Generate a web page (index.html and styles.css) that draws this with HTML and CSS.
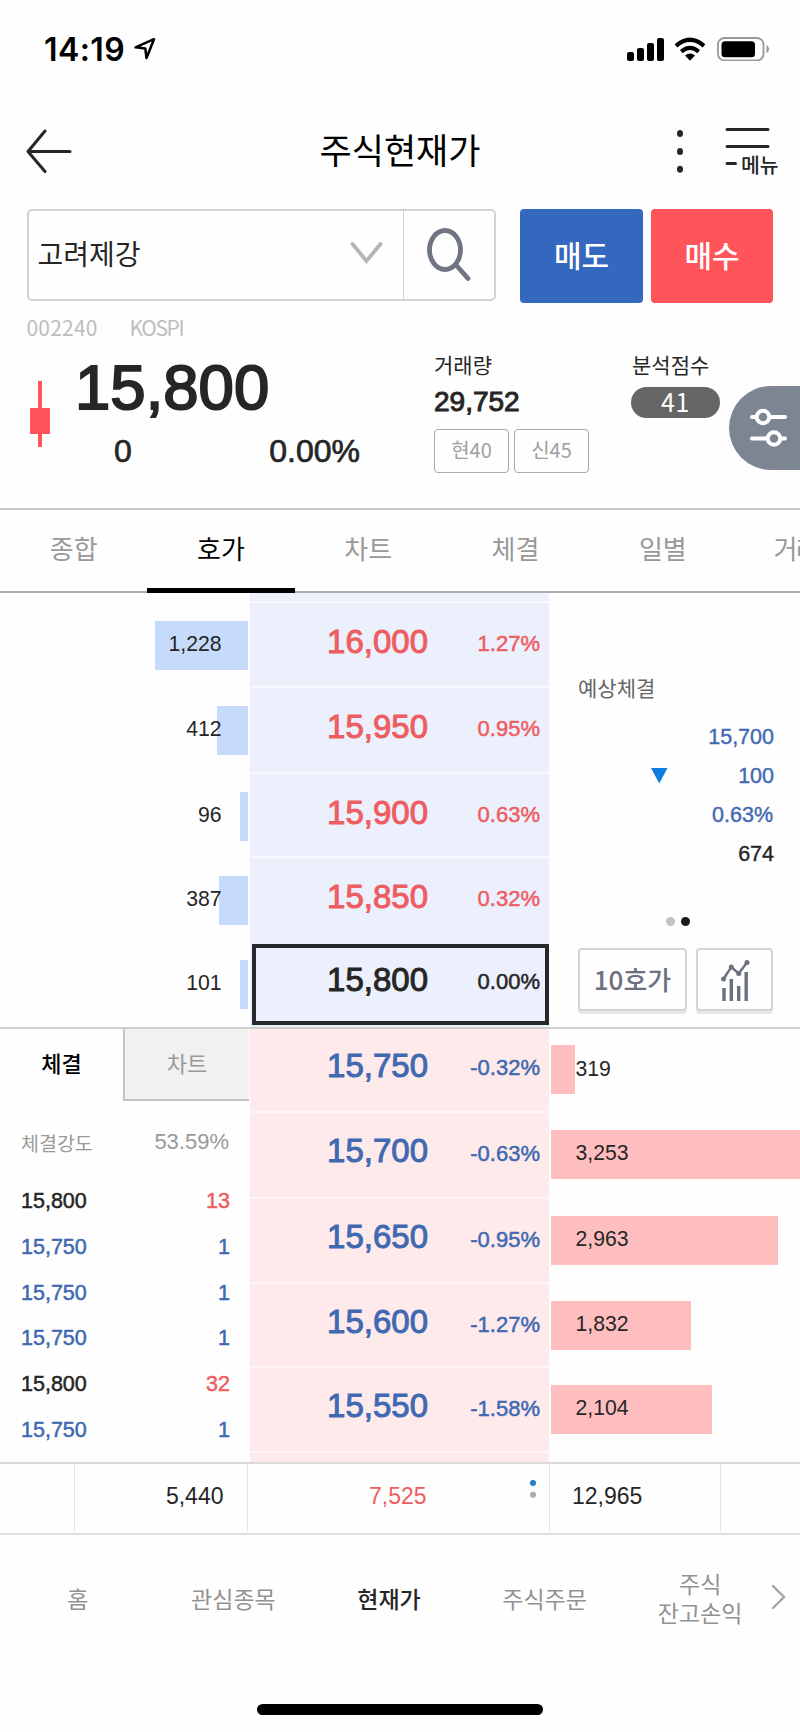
FILE: index.html
```html
<!DOCTYPE html>
<html lang="ko">
<head>
<meta charset="utf-8">
<title>주식현재가</title>
<link rel="stylesheet" href="styles.css">
</head>
<body>
<div class="screen">
  <div class="status">
    <span class="clock">14:19</span>
    <svg class="loc" width="24" height="24" viewBox="0 0 24 24"><path d="M2.500 10.300L21 2.200L13.500 21L12.300 11.500Z" fill="none" stroke="#000" stroke-width="2.500" stroke-linejoin="round"/></svg>
    <svg class="signal" width="38" height="24" viewBox="0 0 38 24"><rect x="0" y="15" width="7" height="9" rx="2"/><rect x="10" y="11" width="7" height="13" rx="2"/><rect x="20" y="6" width="7" height="18" rx="2"/><rect x="30" y="1" width="7" height="23" rx="2"/></svg>
    <svg class="wifi" width="32" height="24" viewBox="0 0 32 24"><g fill="none" stroke="#000" stroke-width="4.200"><path d="M2 8.800Q16 -3.200 30 8.800"/><path d="M7.300 14.600Q16 7.200 24.700 14.600"/></g><path d="M11 18.400Q16 14.600 21 18.400L16 23.800Z"/></svg>
    <svg class="battery" width="54" height="24" viewBox="0 0 54 24"><rect x="1" y="1" width="45.500" height="22.500" rx="6.500" fill="#fff" stroke="#999" stroke-width="1.800"/><rect x="4.500" y="4.200" width="33.500" height="16" rx="3.500"/><path d="M49.500 8Q52 9 52 12T49.500 16Z" fill="#999"/></svg>
  </div>

  <header class="header">
    <svg class="back" width="46" height="44" viewBox="0 0 46 44"><path d="M19 2L2 22.500L19 42.500M2 22.500H44" fill="none" stroke="#262626" stroke-width="3" stroke-linecap="round" stroke-linejoin="round"/></svg>
    <h1 class="title">주식현재가</h1>
    <svg class="more" width="8" height="44" viewBox="0 0 8 44"><g fill="#262626"><ellipse cx="4" cy="4.500" rx="3" ry="3.500"/><ellipse cx="4" cy="22.500" rx="3" ry="3.500"/><ellipse cx="4" cy="40.300" rx="3" ry="3.500"/></g></svg>
    <div class="menu">
      <svg width="46" height="40" viewBox="0 0 46 40"><path d="M2 3.500H43M2 20.500H43M2 37.500H10.500" stroke="#262626" stroke-width="3" stroke-linecap="round"/></svg>
      <span class="menu-text">메뉴</span>
    </div>
  </header>

  <section class="search">
    <div class="picker">
      <div class="name">고려제강
        <svg width="33" height="24" viewBox="0 0 33 24"><path d="M2.500 3L16.500 20L30.500 3" fill="none" stroke="#b5b5b5" stroke-width="3.800" stroke-linecap="round"/></svg>
      </div>
      <div class="lens"><svg width="46" height="56" viewBox="0 0 46 56"><ellipse cx="20" cy="23" rx="15.500" ry="19.500" fill="none" stroke="#6f7583" stroke-width="4.800"/><path d="M31.500 38.500L43 51.500" stroke="#6f7583" stroke-width="4.800" stroke-linecap="round"/></svg></div>
    </div>
    <button class="trade sell">매도</button>
    <button class="trade buy">매수</button>
  </section>

  <section class="quote">
    <div class="codes"><span class="code">002240</span><span class="market">KOSPI</span></div>
    <div class="summary">
      <svg class="candle" width="20" height="66" viewBox="0 0 20 66"><path d="M8 0H12V27H20V53H12V66H8V53H0V27H8Z" fill="#ff555a"/></svg>
      <div class="now">
        <div class="last num">15,800</div>
        <div class="change num"><span>0</span><span>0.00%</span></div>
      </div>
      <div class="volume">
        <div class="label">거래량</div>
        <div class="vol num">29,752</div>
        <div class="tags"><span>현40</span><span>신45</span></div>
      </div>
      <div class="score">
        <div class="label">분석점수</div>
        <div class="pill">41</div>
      </div>
      <div class="side"><svg width="40" height="40" viewBox="0 0 40 40"><g fill="#7e8592" stroke="#fff" stroke-width="4" stroke-linecap="round"><path d="M3 9H36M3 30.500H36"/><circle cx="14" cy="9" r="6.300"/><circle cx="25" cy="30.500" r="6.300"/></g></svg></div>
    </div>
  </section>

  <nav class="tabs"><span>종합</span><span class="on">호가</span><span>차트</span><span>체결</span><span>일별</span><span class="cut">거래원</span></nav>

  <section class="asks num">
    <div class="left">
      <div class="row r85"><i class="bar" style="width:92.5px"></i><b>1,228</b></div>
      <div class="row r86"><i class="bar" style="width:31px"></i><b>412</b></div>
      <div class="row r84"><i class="bar" style="width:7.5px"></i><b>96</b></div>
      <div class="row r84"><i class="bar" style="width:29px"></i><b>387</b></div>
      <div class="row r85"><i class="bar" style="width:7.5px"></i><b>101</b></div>
    </div>
    <div class="prices blue-bg">
      <div class="cell r85 up"><b>16,000</b><em>1.27%</em></div>
      <div class="cell r86 up"><b>15,950</b><em>0.95%</em></div>
      <div class="cell r84 up"><b>15,900</b><em>0.63%</em></div>
      <div class="cell r84 up"><b>15,850</b><em>0.32%</em></div>
      <div class="cell current"><b>15,800</b><em>0.00%</em></div>
    </div>
    <div class="expect">
      <div class="expect-title">예상체결</div>
      <div class="line down">15,700</div>
      <div class="line down"><svg width="17" height="16" viewBox="0 0 17 16"><path d="M0 0H16.500L8.250 15.500Z" fill="#0f7bdc"/></svg>100</div>
      <div class="line down percent">0.63%</div>
      <div class="line">674</div>
      <div class="dots"><i></i><i class="on"></i></div>
      <div class="tools">
        <div class="tool ten">10호가</div>
        <div class="tool chart"><svg width="32" height="44" viewBox="0 0 32 44"><g fill="none" stroke="#6b7080" stroke-width="3.400"><path d="M4 29V42M11.300 20V42M18.700 27V42M26.200 13V42"/><path d="M3.500 20L11.300 8L18.700 14.500L27 3.500" stroke-width="2.400"/></g><g fill="#6b7080"><circle cx="3.500" cy="20" r="2.500"/><circle cx="11.300" cy="8" r="2.500"/><circle cx="18.700" cy="14.500" r="2.500"/><circle cx="27" cy="3.500" r="2.500"/></g></svg></div>
      </div>
    </div>
  </section>

  <section class="bids num">
    <div class="ticks">
      <div class="subtabs"><span class="on">체결</span><span>차트</span></div>
      <div class="power"><span>체결강도</span><b>53.59%</b></div>
      <div class="tick"><span>15,800</span><span class="up">13</span></div>
      <div class="tick down"><span>15,750</span><span>1</span></div>
      <div class="tick down"><span>15,750</span><span>1</span></div>
      <div class="tick down"><span>15,750</span><span>1</span></div>
      <div class="tick"><span>15,800</span><span class="up">32</span></div>
      <div class="tick down"><span>15,750</span><span>1</span></div>
    </div>
    <div class="prices pink-bg">
      <div class="cell first down"><b>15,750</b><em>-0.32%</em></div>
      <div class="cell r86 down"><b>15,700</b><em>-0.63%</em></div>
      <div class="cell r85 down"><b>15,650</b><em>-0.95%</em></div>
      <div class="cell r84 down"><b>15,600</b><em>-1.27%</em></div>
      <div class="cell r85 down"><b>15,550</b><em>-1.58%</em></div>
      <div class="cell rest"></div>
    </div>
    <div class="right">
      <div class="row first"><i class="bar" style="width:24.500px"></i><b>319</b></div>
      <div class="row r86"><i class="bar" style="width:249.500px"></i><b>3,253</b></div>
      <div class="row r85"><i class="bar" style="width:227px"></i><b>2,963</b></div>
      <div class="row r84"><i class="bar" style="width:140px"></i><b>1,832</b></div>
      <div class="row r85"><i class="bar" style="width:161.500px"></i><b>2,104</b></div>
    </div>
  </section>

  <section class="totals num">
    <span></span><span class="t-right">5,440</span>
    <span class="diff">7,525<svg width="8" height="20" viewBox="0 0 8 20"><circle cx="4" cy="4" r="3" fill="#1f7fc8"/><circle cx="4" cy="15.700" r="3" fill="#aaa"/></svg></span>
    <span class="t-left">12,965</span><span></span>
  </section>

  <footer class="nav">
    <span>홈</span><span>관심종목</span><span class="on">현재가</span><span>주식주문</span><span>주식<br>잔고손익</span>
    <svg width="16" height="28" viewBox="0 0 16 28"><path d="M2 3L13 14L2 25" fill="none" stroke="#a5a5a5" stroke-width="2.400" stroke-linecap="round"/></svg>
  </footer>
  <div class="home"></div>
</div>
</body>
</html>
```

FILE: styles.css
```css
* { box-sizing: border-box; }
body { margin: 0; background: #fff; }
b, em, i { font-weight: 400; font-style: normal; }
svg { display: block; flex: none; }

.screen {
  width: 800px;
  height: 1732px;
  overflow: hidden;
  display: flex;
  flex-direction: column;
  background: #fefefe;
  color: #262626;
  font-family: "Noto Sans CJK KR", sans-serif;
}
.screen > * { flex: none; }
.num { font-family: "Liberation Sans", "Noto Sans CJK KR", sans-serif; }
.up { color: #ee5d61; }
.down { color: #4069b2; }

/* status bar */
.status { display: flex; height: 100px; padding: 37px 0 0 44px; }
.clock { width: 88px; font: 600 32px/25px Inter, sans-serif; color: #000; letter-spacing: 0.4px; white-space: nowrap; }
.loc { margin-left: 1px; }
.signal { margin-left: 470px; }
.wifi { margin-left: 9px; }
.battery { margin-left: 11px; }

/* header */
.header { display: flex; height: 109px; padding-top: 29px; }
.back { margin: 0 0 0 26px; }
.title { width: 180px; margin: 2px 0 0 238px; text-align: center; font-size: 35px; line-height: 36px; font-weight: 400; color: #000; white-space: nowrap; }
.more { margin-left: 186px; }
.menu { display: flex; margin: -3px 0 0 41px; }
.menu-text { margin: 26px 0 0 -30px; font-size: 20.5px; line-height: 24px; font-weight: 500; }

/* search row */
.search { display: flex; height: 94px; padding-left: 26.5px; }
.picker { display: flex; width: 469px; height: 92px; border: 2px solid #d2d2d2; border-radius: 5px; }
.name { width: 375.5px; display: flex; justify-content: space-between; padding: 0 20px 4px 9px; align-items: center; font-size: 28px; border-right: 1.5px solid #d2d2d2; }
.lens { padding: 16px 0 0 21px; }
.trade { width: 123px; height: 94px; margin-left: 24.5px; padding: 0 0 5px; border: 0; border-radius: 4px; color: #fff; font: 500 30px "Noto Sans CJK KR", sans-serif; }
.buy { margin-left: 8px; width: 122px; background: #ff555a; }
.sell { background: #3467be; }

/* quote */
.quote { height: 205px; }
.codes { display: flex; padding: 12px 0 0 26.5px; font-size: 21px; line-height: 24px; color: #bdbdbd; }
.code { width: 103px; letter-spacing: 0.2px; }
.market { letter-spacing: -1.4px; }
.summary { display: flex; height: 168px; }
.candle { margin: 42px 0 0 30px; }
.now { width: 310px; padding: 15px 0 0 25px; }
.last { font-size: 63.5px; line-height: 66px; -webkit-text-stroke: 2px; }
.change { display: flex; justify-content: space-between; padding: 14px 0 0 39px; font-size: 32px; line-height: 34px; -webkit-text-stroke: 0.7px; }
.volume { width: 196px; padding: 13px 0 0 74px; }
.label { font-size: 21px; line-height: 24px; white-space: nowrap; }
.vol { margin-top: 13px; font-size: 28px; line-height: 26px; -webkit-text-stroke: 1px; }
.tags { display: flex; gap: 5px; margin-top: 14px; }
.tags span { width: 75px; height: 44px; flex: none; border: 1.5px solid #aaa; border-radius: 4px; text-align: center; font-size: 20px; line-height: 40px; color: #a0a0a0; }
.score { width: 173px; padding: 13px 0 0 75px; }
.score .label { padding-left: 1px; }
.pill { width: 89px; height: 31px; margin-top: 11px; border-radius: 16px; background: #666; color: #fff; text-align: center; font-size: 25px; line-height: 28px; letter-spacing: 0.6px; }
.side { width: 71px; height: 84px; margin-top: 47px; padding: 22px 0 0 20px; border-radius: 42px 0 0 42px; background: #7e8592; }

/* tabs */
.tabs { display: flex; height: 85px; border-top: 2px solid #cbcbcb; border-bottom: 2px solid #ababab; color: #999; font-size: 26px; line-height: 75px; text-align: center; }
.tabs span { width: 147.3px; height: 83px; flex: none; }
.tabs .on { color: #000; border-bottom: 5px solid #000; }
.tabs .cut { padding-left: 37px; text-align: left; letter-spacing: -1.5px; }

/* order book */
.asks { display: flex; height: 434px; }
.left { width: 250px; padding-top: 9px; }
.prices { width: 299px; }
.blue-bg { background: #ecf0fd; padding-top: 8px; }
.pink-bg { background: #feeaeb; }
.r84 { height: 84px; }
.r85 { height: 85px; }
.r86 { height: 86px; }
.first { height: 82px; }
.rest { height: 12px; }
.row { display: grid; }
.row > * { grid-area: 1 / 1; }
.row b { font-size: 21.2px; line-height: 24px; }
.left .bar { height: 49px; margin: 18.5px 2.5px 0 0; justify-self: end; background: #c6dbfc; }
.left b { margin: 30px 28.5px 0 0; justify-self: end; }
.cell { display: flex; border-top: 2px solid #f7f9ff; white-space: nowrap; }
.pink-bg .cell { border-color: #fff5f5; }
.cell b { width: 179px; padding: 20px 1px 0 0; text-align: right; font-size: 33px; line-height: 38px; -webkit-text-stroke: 1px; }
.cell em { flex: 1; padding: 29px 9px 0 0; text-align: right; font-size: 22px; line-height: 24px; -webkit-text-stroke: 0.5px; }
.blue-bg .current { height: 81px; margin: 4px 0.5px 0 2px; border: 4px solid #25282c; }
.blue-bg .current b { width: 173px; padding: 13px 1px 0 0; }
.blue-bg .current em { padding: 22px 4.5px 0 0; }
.pink-bg .cell b { padding-top: 19px; }
.pink-bg .cell.first { border-top: 0; }
.pink-bg .first b { padding-top: 18px; }
.pink-bg .first em { padding-top: 27px; }

.expect { width: 251px; padding: 82px 26px 0 29px; font-size: 21.5px; -webkit-text-stroke: 0.4px; }
.expect-title { margin-bottom: 22px; font-size: 21px; line-height: 28px; color: #666; -webkit-text-stroke: 0; }
.line { display: flex; justify-content: flex-end; gap: 70px; height: 39px; line-height: 24px; }
.line svg { margin-top: 4px; }
.percent { padding-right: 1px; }
.dots { display: flex; gap: 6px; margin: 36px 0 22px 88px; }
.dots i { width: 9px; height: 9px; border-radius: 50%; background: #c2c2c2; }
.dots .on { background: #1a1a1a; }
.tools { display: flex; gap: 9px; }
.tool { flex: none; height: 63px; border: 2px solid #d3d3d3; border-radius: 4px; box-shadow: 0 3px 0 #e6e6e6; }
.ten { width: 109px; text-align: center; color: #6b7080; font: 500 26px/57px "Noto Sans CJK KR", sans-serif; -webkit-text-stroke: 0; }
.chart { width: 77px; padding: 9px 0 0 22px; }

.bids { display: flex; height: 436px; border-top: 2px solid #cfcfcf; }
.ticks { width: 250px; padding-right: 1px; }
.subtabs { display: flex; height: 72px; font: 22px/67px "Noto Sans CJK KR", sans-serif; text-align: center; color: #999; }
.subtabs span { width: 126px; border-left: 2px solid #c4c4c4; border-bottom: 2px solid #c4c4c4; background: #f1f1f1; }
.subtabs .on { width: 123px; border: 0; background: none; color: #000; font-weight: 500; }
.power { display: flex; justify-content: space-between; height: 77px; padding: 29px 20px 0 21px; color: #999; font-size: 22px; line-height: 24px; }
.power span { padding-top: 2px; font-size: 19.5px; }
.tick { display: flex; justify-content: space-between; height: 45.8px; padding: 11px 19px 0 21px; font-size: 21.5px; line-height: 24px; -webkit-text-stroke: 0.5px; }
.right { width: 251px; overflow: hidden; }
.right .bar { height: 49px; margin: 19px 0 0 1.5px; background: #febdbf; }
.right b { margin: 30px 0 0 26.5px; }
.right .first .bar { margin-top: 16px; }
.right .first b { margin-top: 28px; }

/* totals */
.totals { display: grid; grid-template-columns: 75px 173px 302px 171px 79px; height: 73px; margin-top: -1px; border-top: 2px solid #dadada; border-bottom: 2px solid #dedede; padding-bottom: 2px; font-size: 23px; line-height: 65px; }
.totals > span { border-right: 1.5px solid #e4e4e4; }
.totals > span:last-child { border: 0; }
.t-right { padding-right: 23.5px; text-align: right; }
.t-left { padding-left: 22px; }
.totals .diff { display: flex; justify-content: space-between; padding: 0 12px 0 121px; color: #ee5d61; }
.diff svg { margin-top: 15px; }

/* bottom navigation */
.nav { display: flex; align-items: center; height: 133px; padding-bottom: 7px; font-size: 23px; line-height: 29px; color: #929292; text-align: center; }
.nav span { width: 155.6px; flex: none; }
.nav .on { color: #262626; font-weight: 500; }
.nav svg { margin: -3px 0 0 -7px; }
.home { width: 286px; height: 11px; margin: 36px 0 0 257px; border-radius: 6px; background: #000; }
```
